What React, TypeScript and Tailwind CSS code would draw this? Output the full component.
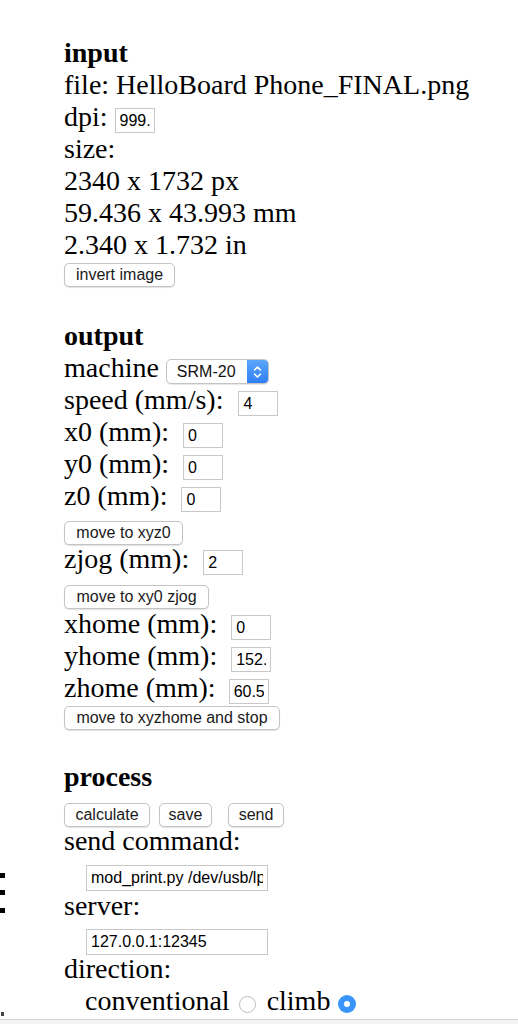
import React from "react";

const sans = "font-['Liberation_Sans',Arial,sans-serif]";

function Btn({ children, className = "", w = "" }: { children: React.ReactNode; className?: string; w?: string }) {
  return (
    <div className={"flex " + className}>
      <button
        className={
          sans +
          " h-[24px] px-0 whitespace-nowrap rounded-[5px] border border-[#c4c4c4] bg-white text-[16px] leading-[22px] text-[#1a1a1a] shadow-[0_1px_1px_rgba(0,0,0,0.12)] flex items-center justify-center " +
          w
        }
      >
        {children}
      </button>
    </div>
  );
}

function Field({ value, w = "w-[40px]", className = "" }: { value: string; w?: string; className?: string }) {
  return (
    <input
      readOnly
      value={value}
      className={
        sans +
        " " +
        w +
        " h-[25px] px-[4px] border border-[#c8c8c8] bg-white text-[16px] text-black outline-none " +
        className
      }
    />
  );
}

function Row({ label, value, ml }: { label: string; value: string; ml: string }) {
  return (
    <div className="flex items-end h-[32px]">
      <span className="leading-[32px] whitespace-pre">{label}</span>
      <Field value={value} className={ml} />
    </div>
  );
}

export default function App() {
  return (
    <div className="relative bg-white text-black font-['Liberation_Serif','Times_New_Roman',serif] text-[28px] leading-[32px]">
      <span className="absolute left-0 top-[873px] w-[5px] h-[5px] bg-black" />
      <span className="absolute left-0 top-[890px] w-[5px] h-[5px] bg-black" />
      <span className="absolute left-0 top-[908px] w-[5px] h-[5px] bg-black" />
      <span className="absolute left-[1px] top-[1012px] w-[3px] h-[4px] bg-[#444]" />

      <div className="pl-[64px] pt-[37px]">
        <div className="font-bold">input</div>
        <div>file: HelloBoard Phone_FINAL.png</div>
        <Row label="dpi:" value="999." ml="ml-[7px]" />
        <div>size:</div>
        <div>2340 x 1732 px</div>
        <div>59.436 x 43.993 mm</div>
        <div>2.340 x 1.732 in</div>
        <Btn className="mt-[2px]" w="w-[111px]">invert image</Btn>

        <div className="mt-[33px] font-bold">output</div>
        <div className="flex items-end h-[32px]">
          <span className="leading-[32px]">machine</span>
          <div
            className={
              sans +
              " ml-[7px] flex h-[25px] w-[103px] rounded-[5px] border border-[#c4c4c4] bg-white overflow-hidden shadow-[0_1px_1px_rgba(0,0,0,0.1)]"
            }
          >
            <span className="flex-1 pl-[10px] text-[16px] leading-[23px] text-[#111]">SRM-20</span>
            <span className="w-[21px] h-full flex items-center justify-center bg-gradient-to-b from-[#5aa6fb] to-[#2f7ff5]">
              <svg width="9" height="14" viewBox="0 0 9 14" fill="none" stroke="white" strokeWidth="1.6" strokeLinecap="round" strokeLinejoin="round">
                <path d="M1.5 5 L4.5 2 L7.5 5" />
                <path d="M1.5 9 L4.5 12 L7.5 9" />
              </svg>
            </span>
          </div>
        </div>
        <Row label="speed (mm/s):" value="4" ml="ml-[15px]" />
        <Row label="x0 (mm):" value="0" ml="ml-[14px]" />
        <Row label="y0 (mm):" value="0" ml="ml-[14px]" />
        <Row label="z0 (mm):" value="0" ml="ml-[14px]" />
        <Btn className="mt-[9px]" w="w-[119px]">move to xyz0</Btn>
        <div className="mt-[-2px]">
          <Row label="zjog (mm):" value="2" ml="ml-[14px]" />
        </div>
        <Btn className="mt-[10px]" w="w-[145px]">move to xy0 zjog</Btn>
        <div className="mt-[-1px]">
          <Row label="xhome (mm):" value="0" ml="ml-[14px]" />
          <Row label="yhome (mm):" value="152.4" ml="ml-[14px]" />
          <Row label="zhome (mm):" value="60.5" ml="ml-[13px]" />
        </div>
        <Btn className="mt-[2px]" w="w-[216px]">move to xyzhome and stop</Btn>

        <div className="mt-[31px] font-bold">process</div>
        <div className="mt-[10px] flex">
          <Btn w="w-[86px]">calculate</Btn>
          <Btn className="ml-[9px]" w="w-[53px]">save</Btn>
          <Btn className="ml-[16px]" w="w-[56px]">send</Btn>
        </div>
        <div className="mt-[-2px]">send command:</div>
        <div className="mt-[8px] flex">
          <Field value="mod_print.py /dev/usb/lp0" w="w-[182px]" className="ml-[22px] h-[26px]" />
        </div>
        <div className="mt-[-1px]">server:</div>
        <div className="mt-[7px] flex">
          <Field value="127.0.0.1:12345" w="w-[182px]" className="ml-[22px] h-[26px]" />
        </div>
        <div className="mt-[-2px]">direction:</div>
        <div className="flex items-center h-[32px] pl-[21px]">
          <span>conventional</span>
          <span className="ml-[9px] mt-[6px] w-[17px] h-[17px] rounded-full border border-[#bdbdbd] bg-white" />
          <span className="ml-[11px]">climb</span>
          <span className="ml-[8px] mt-[6px] w-[18px] h-[18px] rounded-full bg-[#3a95fb] flex items-center justify-center">
            <span className="w-[6px] h-[6px] rounded-full bg-white" />
          </span>
        </div>
      </div>
      <div className="mt-[2px] h-[12px] border-t border-[#d2d2d2] bg-[#f3f3f3]" />
    </div>
  );
}
